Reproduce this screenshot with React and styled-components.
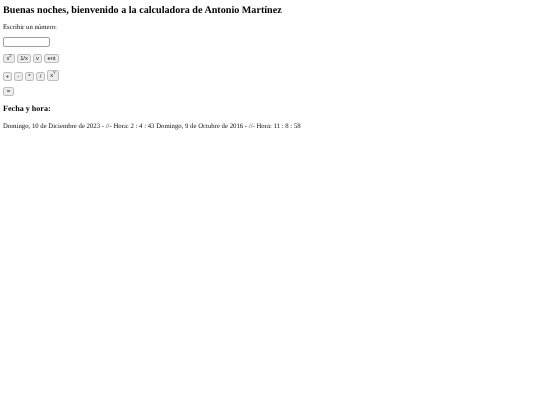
import React from "react"
import styled, { createGlobalStyle } from "styled-components"

const GlobalStyle = createGlobalStyle`
  html, body {
    margin: 0;
    background: #fff;
  }
  body {
    font-family: "Liberation Serif", "Times New Roman", serif;
    color: #000;
    text-rendering: geometricPrecision;
  }
`

const Page = styled.div`
  padding: 5px 0 0 3px;
  width: 537px;
  height: 400px;
  overflow: hidden;
  will-change: transform;
`

const Title = styled.h2`
  margin: 0 0 6px;
  font-size: 10.13px;
  line-height: 12px;
  font-weight: bold;
  white-space: nowrap;
`

const Label = styled.p`
  margin: 0 0 5px;
  font-size: 6.76px;
  line-height: 9px;
  color: #111;
`

const NumberInput = styled.input`
  display: block;
  box-sizing: border-box;
  width: 47px;
  height: 10px;
  margin: 0 0 7px;
  padding: 0;
  background: #fff;
  border: 1px solid #a0a0a0;
  border-radius: 2px;
`

const KeyRow = styled.div`
  display: flex;
  align-items: flex-end;
  gap: 2px;
  margin-bottom: ${(p) => p.$after}px;
`

const Key = styled.button`
  box-sizing: border-box;
  width: ${(p) => p.$w || 9}px;
  height: ${(p) => p.$h || 9}px;
  padding: 0;
  font-family: "Liberation Sans", Arial, sans-serif;
  font-size: 5.8px;
  line-height: 1;
  color: #222;
  background: #ececec;
  border: 1px solid #bdbdbd;
  border-radius: 2px;

  sup {
    font-size: 4px;
    line-height: 0;
  }
`

const Subtitle = styled.h3`
  margin: 0 0 8px;
  font-size: 8.1px;
  line-height: 10px;
  font-weight: bold;
`

const DateLine = styled.p`
  margin: 0;
  font-size: 6.76px;
  line-height: 9px;
  white-space: nowrap;
  color: #111;
`

export default function App() {
  return (
    <>
      <GlobalStyle />
      <Page>
        <Title>Buenas noches, bienvenido a la calculadora de Antonio Martínez</Title>
        <Label>Escribir un número:</Label>
        <NumberInput type="text" />
        <KeyRow $after={7}>
          <Key $w={12}>x<sup>2</sup></Key>
          <Key $w={14}>1/x</Key>
          <Key $w={9}>v</Key>
          <Key $w={15}>ent</Key>
        </KeyRow>
        <KeyRow $after={6}>
          <Key>+</Key>
          <Key>-</Key>
          <Key>*</Key>
          <Key>/</Key>
          <Key $w={12} $h={11}>x<sup>Y</sup></Key>
        </KeyRow>
        <KeyRow $after={8}>
          <Key $w={11}>=</Key>
        </KeyRow>
        <Subtitle>Fecha y hora:</Subtitle>
        <DateLine>Domingo, 10 de Diciembre de 2023 - //- Hora: 2 : 4 : 43 Domingo, 9 de Octubre de 2016 - //- Hora: 11 : 8 : 58</DateLine>
      </Page>
    </>
  )
}
